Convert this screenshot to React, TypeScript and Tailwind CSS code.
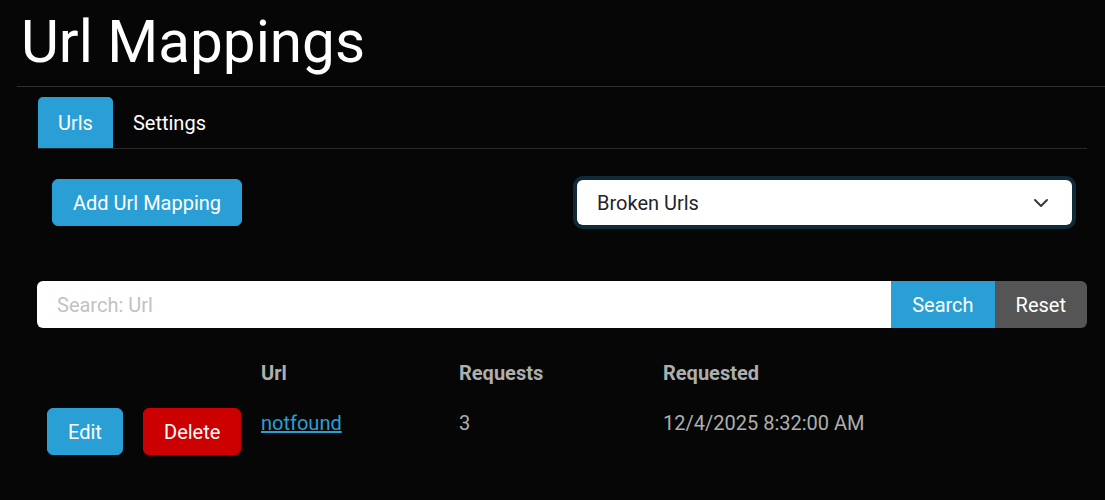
import React from "react";

const rows = [
  { url: "notfound", requests: 3, requested: "12/4/2025 8:32:00 AM" },
];

export default function App() {
  return (
    <div className="min-h-[500px] bg-[#060606] font-['Roboto',sans-serif] text-[20px] leading-[30px] text-[#adafae]">
      {/* Page heading */}
      <div className="ml-[17px] h-[87px] border-b border-[#2e2e2e]">
        <h1 className="pt-[7px] pl-[4px] text-[58.4px] leading-[70px] font-normal text-white">
          Url Mappings
        </h1>
      </div>

      <div className="ml-[37px] mr-[18px]">
        {/* Tabs */}
        <div className="mt-[10px] ml-px flex border-b border-[#282828]">
          <button className="h-[51px] rounded-t-[5px] bg-[#2a9fd6] px-5 text-white">
            Urls
          </button>
          <button className="h-[51px] px-5 text-white">Settings</button>
        </div>

        {/* Actions */}
        <div className="mt-[30px] grid grid-cols-2 items-center">
          <div className="px-[15px]">
            <button className="h-[47px] rounded-[6px] border border-[#2a9fd6] bg-[#2a9fd6] px-5 text-white">
              Add Url Mapping
            </button>
          </div>
          <div className="px-[15px]">
            <div className="flex h-[45px] items-center justify-between rounded-[6px] bg-white pl-5 pr-[23px] text-[#212529] ring-4 ring-[#0f2a38]">
              <span>Broken Urls</span>
              <svg width="16" height="16" viewBox="0 0 16 16" fill="none">
                <path
                  d="m2 5 6 6 6-6"
                  stroke="#343a40"
                  strokeWidth="2"
                  strokeLinecap="round"
                  strokeLinejoin="round"
                />
              </svg>
            </div>
          </div>
        </div>

        {/* Search */}
        <div className="mt-[55px] flex h-[47px]">
          <input
            className="min-w-0 flex-1 rounded-l-[6px] bg-white pl-5 text-[#212529] outline-none placeholder:text-[#c2c2c2]"
            placeholder="Search: Url"
          />
          <button className="bg-[#2a9fd6] px-[21px] text-white">Search</button>
          <button className="rounded-r-[6px] bg-[#555555] px-[21px] text-white">
            Reset
          </button>
        </div>

        {/* Table */}
        <div className="mt-5 grid grid-cols-[96px_118px_198px_204px_1fr]">
          <div className="p-[10px]" />
          <div className="p-[10px]" />
          <div className="p-[10px] font-bold">Url</div>
          <div className="p-[10px] font-bold">Requests</div>
          <div className="p-[10px] font-bold">Requested</div>
          {rows.map((r) => (
            <React.Fragment key={r.url}>
              <div className="p-[10px]">
                <button className="h-[47px] rounded-[6px] border border-[#2a9fd6] bg-[#2a9fd6] px-5 text-white">
                  Edit
                </button>
              </div>
              <div className="p-[10px]">
                <button className="h-[47px] rounded-[6px] border border-[#cc0000] bg-[#cc0000] px-5 text-white">
                  Delete
                </button>
              </div>
              <div className="p-[10px]">
                <a href="#" className="text-[#2a9fd6] underline">
                  {r.url}
                </a>
              </div>
              <div className="p-[10px]">{r.requests}</div>
              <div className="p-[10px]">{r.requested}</div>
            </React.Fragment>
          ))}
        </div>
      </div>
    </div>
  );
}
